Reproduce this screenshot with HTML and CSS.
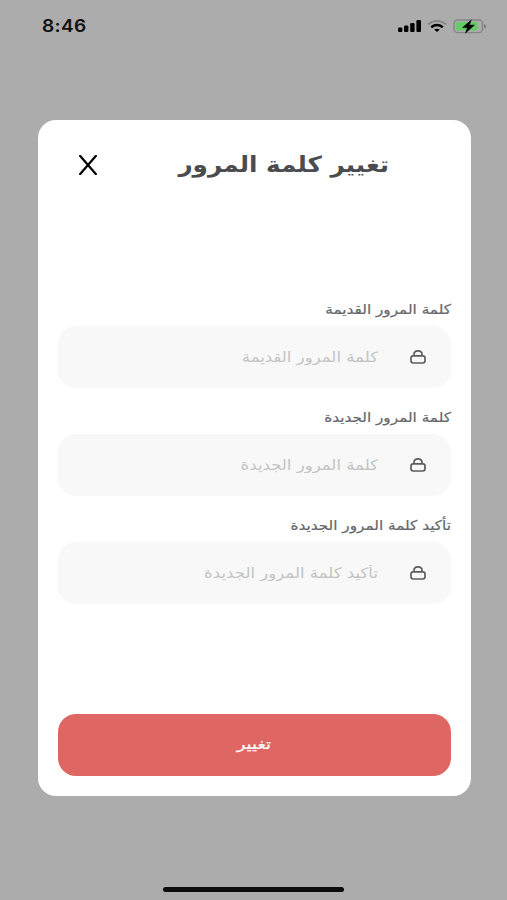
FILE: index.html
```html
<!DOCTYPE html>
<html lang="ar" dir="rtl">
<head>
    <meta charset="UTF-8">
    <meta name="viewport" content="width=device-width, initial-scale=1.0">
    <title>تغيير كلمة المرور</title>
    <link rel="stylesheet" href="styles.css">
</head>
<body>
    <svg class="icon-defs" aria-hidden="true">
        <symbol id="lock" viewBox="0 0 16 14">
            <rect x="1" y="5.8" width="14" height="7.2" rx="2.2"/>
            <path d="M4 5.8V4.6C4 2.4 5.7.9 8 .9s4 1.5 4 3.7v1.2"/>
        </symbol>
    </svg>

    <header class="status-bar" dir="ltr">
        <span class="time">8:46</span>
        <div class="status-icons">
            <svg class="signal" viewBox="0 0 23 12" width="23" height="12">
                <rect x="0" y="7.5" width="4.4" height="4.5" rx="1.2"/>
                <rect x="6" y="5.5" width="4.4" height="6.5" rx="1.2"/>
                <rect x="12.2" y="3" width="4.4" height="9" rx="1.2"/>
                <rect x="18.4" y="0" width="4.6" height="12" rx="1.2"/>
            </svg>
            <svg class="wifi" viewBox="0 0 20 12" width="20" height="12">
                <path class="wifi-off" d="M1 4.2Q10-2.6 19 4.2"/>
                <path class="wifi-on" d="M4.2 7.2Q10 2.8 15.8 7.2"/>
                <path d="M7.2 9.5Q10 7.8 12.8 9.5L10 11.9z"/>
            </svg>
            <svg class="battery" viewBox="0 0 34 15" width="34" height="15">
                <rect class="battery-case" x="1" y="1" width="28.5" height="12.6" rx="3.6"/>
                <rect class="battery-level" x="3" y="3" width="21.5" height="8.6" rx="1.6"/>
                <path class="battery-tip" d="M31.2 5.2c2.4.7 2.4 3.6 0 4.3z"/>
                <path class="bolt" d="M18.4.8L9.4 8.6h4.8l-1.7 5.6 9-8.2h-5z"/>
            </svg>
        </div>
    </header>

    <main class="modal">
        <div class="modal-header">
            <h1>تغيير كلمة المرور</h1>
            <button type="button" class="close" aria-label="إغلاق">
                <svg viewBox="0 0 20 20" width="20" height="20">
                    <path d="M2.2 1L17.8 19M17.8 1L2.2 19M1.2 1H3M17 1h1.8M1.2 19H3M17 19h1.8"/>
                </svg>
            </button>
        </div>

        <form class="password-form">
            <div class="form-group">
                <label for="old-password">كلمة المرور القديمة</label>
                <div class="field">
                    <svg class="lock"><use href="#lock"/></svg>
                    <input type="password" id="old-password" placeholder="كلمة المرور القديمة">
                </div>
            </div>

            <div class="form-group">
                <label for="new-password">كلمة المرور الجديدة</label>
                <div class="field">
                    <svg class="lock"><use href="#lock"/></svg>
                    <input type="password" id="new-password" placeholder="كلمة المرور الجديدة">
                </div>
            </div>

            <div class="form-group">
                <label for="confirm-password">تأكيد كلمة المرور الجديدة</label>
                <div class="field">
                    <svg class="lock"><use href="#lock"/></svg>
                    <input type="password" id="confirm-password" placeholder="تأكيد كلمة المرور الجديدة">
                </div>
            </div>

            <button type="submit" class="submit"><span>تغيير</span></button>
        </form>
    </main>

    <div class="home-indicator"></div>
</body>
</html>
```
FILE: styles.css
```css
* {
    box-sizing: border-box;
}

body {
    font-family: "DejaVu Sans", sans-serif;
    background-color: #acacac;
    margin: 0;
    height: 900px;
    display: flex;
    flex-direction: column;
    align-items: center;
    overflow: hidden;
}

.icon-defs {
    display: none;
}

.status-bar {
    width: 100%;
    height: 119.5px;
    padding: 16px 20px 0 42px;
    display: flex;
    justify-content: space-between;
    align-items: flex-start;
}

.time {
    font-family: Inter, sans-serif;
    font-size: 17px;
    font-weight: 600;
    line-height: 20px;
    letter-spacing: 0.3px;
    color: #111;
    transform: scaleX(1.12);
    transform-origin: left;
}

.status-icons {
    height: 20px;
    display: flex;
    align-items: center;
    gap: 6px;
}

.wifi-on,
.wifi-off {
    fill: none;
    stroke: #000;
    stroke-width: 2.4;
}

.wifi-off {
    stroke: #858585;
    stroke-width: 1.8;
}

.battery-case {
    fill: none;
    stroke: #858585;
    stroke-width: 1.4;
}

.battery-level {
    fill: #65cb67;
}

.battery-tip {
    fill: #777;
}

.bolt {
    stroke: #000;
    stroke-width: 0.4;
}

.modal {
    width: 433px;
    height: 676px;
    margin-left: 1px;
    padding: 0 20px 20px;
    border-radius: 18px;
    background-color: #fff;
    display: flex;
    flex-direction: column;
}

.modal-header {
    height: 90px;
    padding: 0 61px 0 20px;
    display: flex;
    justify-content: space-between;
    align-items: center;
}

h1 {
    margin: 0;
    font-size: 22px;
    line-height: 30px;
    color: #4b4c50;
    white-space: nowrap;
    transform: scaleX(1.12);
    transform-origin: right;
}

.close {
    padding: 0;
    border: none;
    background: none;
    display: flex;
    cursor: pointer;
}

.close path {
    fill: none;
    stroke: #000;
    stroke-width: 2.2;
}

.password-form {
    flex: 1;
    padding-top: 90px;
    display: flex;
    flex-direction: column;
}

.form-group {
    margin-bottom: 20.3px;
}

label {
    display: block;
    height: 26px;
    line-height: 18px;
    font-size: 13.5px;
    color: #66676a;
    -webkit-text-stroke: 0.2px #66676a;
    white-space: nowrap;
    transform: scaleX(1.13);
    transform-origin: right;
}

.field {
    height: 62px;
    padding: 0 25px;
    border-radius: 18px;
    background-color: #f8f8f8;
    display: flex;
    align-items: center;
    gap: 32px;
}

.lock {
    width: 16px;
    height: 14px;
    flex-shrink: 0;
    fill: none;
    stroke: #5c5c5c;
    stroke-width: 1.7;
}

input {
    width: 250px;
    padding: 0;
    border: none;
    outline: none;
    background: none;
    font-family: inherit;
    font-size: 14.5px;
    transform: scaleX(1.14);
    transform-origin: right;
}

input::placeholder {
    color: #c4c4c4;
    opacity: 1;
}

.submit {
    height: 62px;
    margin-top: auto;
    padding-bottom: 3px;
    border: none;
    border-radius: 18px;
    background-color: #df6763;
    color: #fff;
    font-family: inherit;
    font-size: 14.5px;
    cursor: pointer;
}

.submit span {
    display: inline-block;
    -webkit-text-stroke: 0.2px #fff;
    transform: scaleX(1.24);
}

.home-indicator {
    width: 181px;
    height: 5px;
    margin-top: auto;
    margin-bottom: 8px;
    border-radius: 3px;
    background-color: #0c0c0c;
}
```
